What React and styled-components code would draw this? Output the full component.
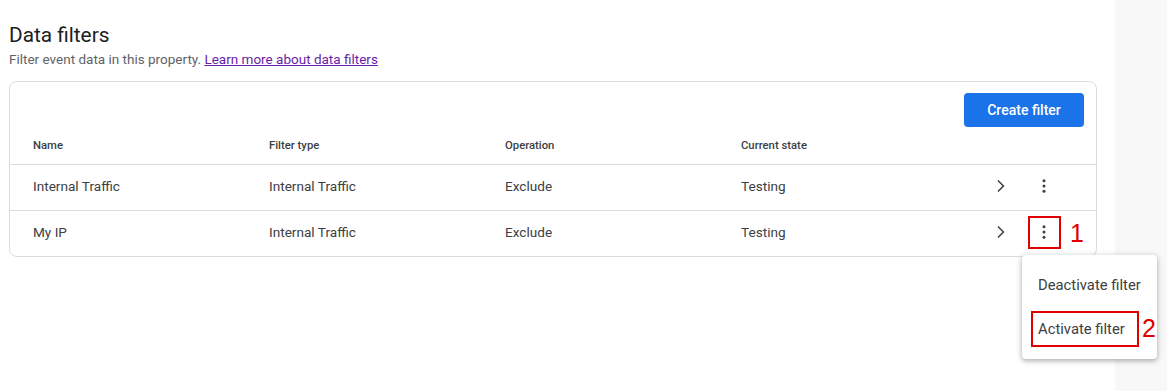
import React from 'react';
import styled, { createGlobalStyle } from 'styled-components';

const GlobalStyle = createGlobalStyle`
  html, body { margin: 0; padding: 0; background: #fff; }
  body { font-family: Roboto, "Noto Sans", Arial, sans-serif; color: #202124; }
`;

const Page = styled.div`
  display: flex;
  height: 391px;
  overflow: hidden;
`;

const Main = styled.div`
  width: 1115px;
  padding: 22px 18px 0 9px;
  box-sizing: border-box;
`;

const Side = styled.div`
  flex: 1;
  background: #f8f8f8;
`;

const Title = styled.h1`
  margin: 0;
  font-size: 20.8px;
  font-weight: 400;
  line-height: 26px;
  color: #202124;
`;

const Subtitle = styled.p`
  margin: 2px 0 0;
  font-size: 13.5px;
  line-height: 18px;
  color: #5f6368;
`;

const Link = styled.a`
  color: #681da8;
  text-decoration: underline;
`;

const Card = styled.div`
  margin-top: 13px;
  border: 1px solid #dadce0;
  border-radius: 8px;
  background: #fff;
`;

const Toolbar = styled.div`
  display: flex;
  justify-content: flex-end;
  padding: 11px 12px 0;
`;

const Button = styled.button`
  width: 120px;
  height: 34px;
  border: none;
  border-radius: 4px;
  background: #1a73e8;
  color: #fff;
  font-family: inherit;
  font-size: 14px;
  font-weight: 500;
  cursor: pointer;
`;

const Row = styled.div`
  display: grid;
  grid-template-columns: 236px 236px 236px 236px 1fr;
  align-items: center;
  padding-left: 23px;
  padding-bottom: ${p => (p.$head ? '0' : '3px')};
  height: ${p => (p.$head ? '37px' : '46px')};
  border-top: ${p => (p.$first ? 'none' : '1px solid #dadce0')};
  box-sizing: border-box;
  position: relative;
`;

const HeadCell = styled.div`
  font-size: 11.3px;
  font-weight: 500;
  color: #3c4043;
`;

const Cell = styled.div`
  font-size: 13.6px;
  color: #3c4043;
`;

const Actions = styled.div`
  display: flex;
  align-items: center;
  justify-content: flex-end;
  padding-right: 43px;
  gap: 26px;
`;

const IconBox = styled.div`
  width: 18px;
  height: 18px;
  display: flex;
  align-items: center;
  justify-content: center;
  position: relative;
`;

const Mark = styled.div`
  position: absolute;
  left: -7px;
  top: -7px;
  width: 29px;
  height: 29px;
  border: 2px solid #e00000;
`;

const Num = styled.span`
  position: absolute;
  font-family: "Liberation Sans", Arial, sans-serif;
  font-size: 25px;
  line-height: 25px;
  color: #e00000;
  left: ${p => p.$left}px;
  top: ${p => p.$top}px;
`;

const Menu = styled.div`
  position: absolute;
  left: -13px;
  top: 32px;
  width: 135px;
  padding: 8px 0;
  background: #fff;
  border-radius: 4px;
  box-shadow: 0 2px 4px rgba(60, 64, 67, 0.3), 0 1px 6px 1px rgba(60, 64, 67, 0.15);
  z-index: 5;
`;

const MenuItem = styled.div`
  position: relative;
  padding: 0 16px;
  height: 44px;
  display: flex;
  align-items: center;
  font-size: 14.8px;
  color: #3c4043;
  white-space: nowrap;
`;

const ItemMark = styled.div`
  position: absolute;
  left: 9px;
  top: 4px;
  width: 104px;
  height: 32px;
  border: 2px solid #e00000;
`;

const Chevron = () => (
  <svg width="18" height="18" viewBox="0 0 24 24">
    <path d="M8.6 5.4 10 4l8 8-8 8-1.4-1.4L15.2 12z" fill="#3c4043" />
  </svg>
);

const Kebab = () => (
  <svg width="18" height="18" viewBox="0 0 24 24">
    <circle cx="12" cy="5" r="2" fill="#3c4043" />
    <circle cx="12" cy="12" r="2" fill="#3c4043" />
    <circle cx="12" cy="19" r="2" fill="#3c4043" />
  </svg>
);

const filters = [
  { name: 'Internal Traffic', type: 'Internal Traffic', op: 'Exclude', state: 'Testing' },
  { name: 'My IP', type: 'Internal Traffic', op: 'Exclude', state: 'Testing', open: true },
];

const App = () => (
  <>
    <GlobalStyle />
    <Page>
      <Main>
        <Title>Data filters</Title>
        <Subtitle>
          Filter event data in this property. <Link href="#">Learn more about data filters</Link>
        </Subtitle>
        <Card>
          <Toolbar>
            <Button>Create filter</Button>
          </Toolbar>
          <Row $head $first>
            <HeadCell>Name</HeadCell>
            <HeadCell>Filter type</HeadCell>
            <HeadCell>Operation</HeadCell>
            <HeadCell>Current state</HeadCell>
            <div />
          </Row>
          {filters.map(f => (
            <Row key={f.name}>
              <Cell>{f.name}</Cell>
              <Cell>{f.type}</Cell>
              <Cell>{f.op}</Cell>
              <Cell>{f.state}</Cell>
              <Actions>
                <IconBox><Chevron /></IconBox>
                <IconBox>
                  <Kebab />
                  {f.open && (
                    <>
                      <Mark />
                      <Num $left={35} $top={-2}>1</Num>
                      <Menu>
                        <MenuItem>Deactivate filter</MenuItem>
                        <MenuItem>
                          <ItemMark />
                          Activate filter
                          <Num $left={120} $top={9}>2</Num>
                        </MenuItem>
                      </Menu>
                    </>
                  )}
                </IconBox>
              </Actions>
            </Row>
          ))}
        </Card>
      </Main>
      <Side />
    </Page>
  </>
);

export default App;
